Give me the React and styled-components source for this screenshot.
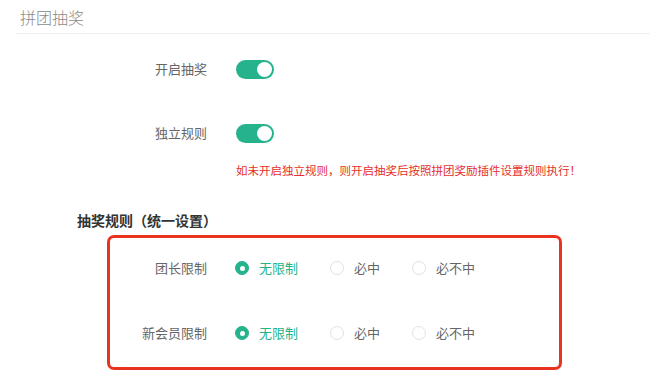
import React from "react";
import styled, { createGlobalStyle } from "styled-components";

const GREEN = "#25b38b";

const Global = createGlobalStyle`
  html, body { margin: 0; padding: 0; background: #fff; }
  body { font-family: "Noto Sans CJK SC", "Noto Sans", sans-serif; }
  * { box-sizing: border-box; }
`;

const Page = styled.div`
  width: 650px;
  height: 377px;
  overflow: hidden;
  background: #fff;
`;

const Header = styled.div`
  margin-left: 16px;
  height: 34px;
  padding: 6px 0 0 4px;
  border-bottom: 1px solid #eeeeee;
  font-size: 16px;
  line-height: 22px;
  font-weight: 300;
  color: #8a8a8a;
`;

const Form = styled.div`
  display: flex;
  flex-direction: column;
  padding-top: 17px;
`;

const Row = styled.div`
  display: grid;
  grid-template-columns: ${(p) => p.$labelWidth}px 1fr;
  column-gap: 29px;
  align-items: center;
  height: 36px;
  margin-top: ${(p) => p.$mt || 0}px;
`;

const Label = styled.div`
  text-align: right;
  font-size: 13px;
  color: #666;
  line-height: 18px;
`;

const Toggle = styled.div`
  width: 38px;
  height: 19px;
  border-radius: 10px;
  background: ${GREEN};
  display: flex;
  align-items: center;
  justify-content: flex-end;
  padding-right: 2px;
`;

const Knob = styled.span`
  width: 15px;
  height: 15px;
  border-radius: 50%;
  background: #fff;
`;

const Hint = styled.div`
  margin: 11px 0 0 236px;
  font-size: 11.5px;
  line-height: 16px;
  color: #e5302a;
  white-space: nowrap;
`;

const SectionTitle = styled.div`
  margin: 32px 0 0 77px;
  font-size: 14px;
  line-height: 20px;
  font-weight: 700;
  color: #333;
`;

const Box = styled.div`
  margin: 5px 0 0 107px;
  width: 455px;
  height: 135px;
  border: 3px solid #e9331f;
  border-radius: 7px;
  padding: 12px 0 0 0;
  display: flex;
  flex-direction: column;
  gap: 29px;
`;

const Options = styled.div`
  display: flex;
  align-items: center;
`;

const Option = styled.label`
  display: flex;
  align-items: center;
  gap: 10px;
  margin-right: 33px;
  margin-left: -1px;
  font-size: 13px;
  line-height: 18px;
  color: ${(p) => (p.$checked ? GREEN : "#666")};
`;

const Dot = styled.span`
  width: 14px;
  height: 14px;
  border-radius: 50%;
  display: flex;
  align-items: center;
  justify-content: center;
  background: ${(p) => (p.$checked ? GREEN : "#fff")};
  border: 1px solid ${(p) => (p.$checked ? GREEN : "#e2e2e2")};
  &::after {
    content: "";
    width: 5px;
    height: 5px;
    border-radius: 50%;
    background: ${(p) => (p.$checked ? "#fff" : "transparent")};
  }
`;

const choices = ["无限制", "必中", "必不中"];

function RadioGroup({ value }) {
  return (
    <Options>
      {choices.map((c) => (
        <Option key={c} $checked={c === value}>
          <Dot $checked={c === value} />
          {c}
        </Option>
      ))}
    </Options>
  );
}

export default function App() {
  return (
    <Page>
      <Global />
      <Header>拼团抽奖</Header>
      <Form>
        <Row $labelWidth={207}>
          <Label>开启抽奖</Label>
          <Toggle><Knob /></Toggle>
        </Row>
        <Row $labelWidth={207} $mt={28}>
          <Label>独立规则</Label>
          <Toggle><Knob /></Toggle>
        </Row>
        <Hint>如未开启独立规则，则开启抽奖后按照拼团奖励插件设置规则执行！</Hint>
        <SectionTitle>抽奖规则（统一设置）</SectionTitle>
        <Box>
          <Row $labelWidth={97}>
            <Label>团长限制</Label>
            <RadioGroup value="无限制" />
          </Row>
          <Row $labelWidth={97}>
            <Label>新会员限制</Label>
            <RadioGroup value="无限制" />
          </Row>
        </Box>
      </Form>
    </Page>
  );
}
